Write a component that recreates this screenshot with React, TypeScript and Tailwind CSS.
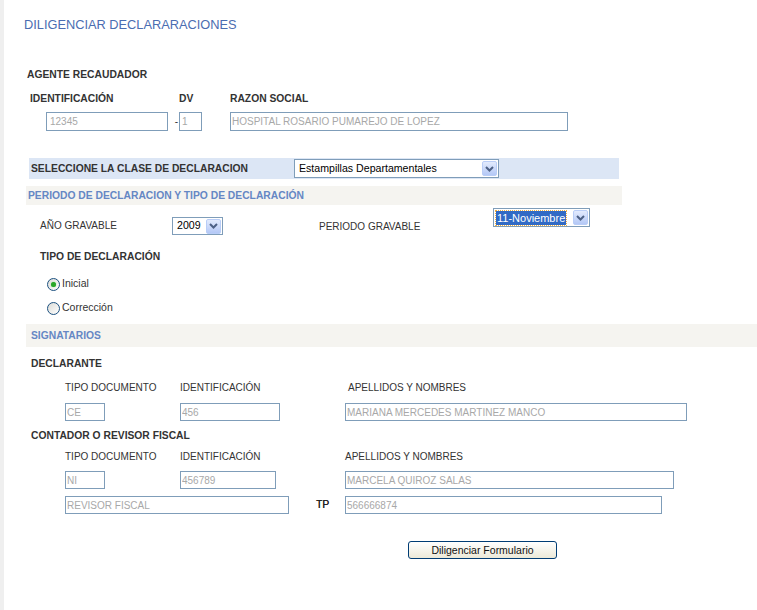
import React from "react";

type FieldProps = { value: string; w: string; h?: string; pad?: string };

const Field: React.FC<FieldProps> = ({ value, w, h = "h-[18px]", pad = "pl-[1px]" }) => (
    <input
        readOnly
        value={value}
        className={`block ${w} ${h} ${pad} border border-[#7f9db9] bg-white text-[10px] text-[#a8a8a8] outline-none`}
    />
);

const Chevron = () => (
    <svg width="9" height="6" viewBox="0 0 9 6">
        <path d="M1 1 L4.5 4.5 L8 1" fill="none" stroke="#4d6185" strokeWidth="2" />
    </svg>
);

type SelectProps = { text: string; w: string; h: string; focused?: boolean };

const XpSelect: React.FC<SelectProps> = ({ text, w, h, focused }) => (
    <div className={`${w} ${h} flex items-center border border-[#7f9db9] bg-white p-[1px]`}>
        <div className="flex-1 flex items-center min-w-0 pl-[1px]">
            {focused ? (
                <span className="bg-[#316ac5] text-white text-[11px] leading-[14px] px-[1px] outline-1 outline-dotted outline-[#f0b040]">
                    {text}
                </span>
            ) : (
                <span className="text-[10.6px] text-black pl-[2px] whitespace-nowrap">{text}</span>
            )}
        </div>
        <div className="w-[15px] h-[15px] rounded-[2px] border border-[#b9cdf7] bg-linear-to-b from-[#e3ebfd] to-[#b4c8f6] flex items-center justify-center">
            <Chevron />
        </div>
    </div>
);

const Radio: React.FC<{ checked?: boolean; label: string }> = ({ checked, label }) => (
    <div className="flex items-center h-[16px] ml-[43px]">
        <div className="w-[13px] h-[13px] rounded-full border border-[#1c5180] bg-linear-to-br from-[#dcdcd7] to-white flex items-center justify-center">
            {checked && <div className="w-[5px] h-[5px] rounded-full bg-[#2aa62a] shadow-[0_0_1px_#5fd35f]" />}
        </div>
        <span className="ml-[2px] text-[10.5px] text-[#333]">{label}</span>
    </div>
);

const App: React.FC = () => {
    const bold = "font-bold text-[10.3px] text-[#333] leading-[14px]";
    const label = "text-[10px] text-[#333] leading-[14px]";

    return (
        <div className="flex min-h-[610px] font-['Liberation_Sans',Arial,sans-serif]">
            <div className="w-[4px] shrink-0 bg-[#efefef]" />
            <div className="flex-1 bg-white flex flex-col">
                <div className="mt-[17px] pl-[20px] h-[16px] leading-[16px] text-[12.8px] text-[#4b6db1]">
                    DILIGENCIAR DECLARARACIONES
                </div>

                <div className={`mt-[35px] ml-[23px] ${bold}`}>AGENTE RECAUDADOR</div>

                <div className={`mt-[10px] ml-[26px] flex ${bold}`}>
                    <div className="w-[149px]">IDENTIFICACIÓN</div>
                    <div className="w-[51px]">DV</div>
                    <div>RAZON SOCIAL</div>
                </div>

                <div className="mt-[6px] ml-[42px] flex items-center">
                    <Field value="12345" w="w-[122px]" h="h-[19px]" pad="pl-[3px]" />
                    <div className="w-[11px] text-right text-[10px] text-[#333] pr-[1px]">-</div>
                    <Field value="1" w="w-[23px]" h="h-[19px]" pad="pl-[2px]" />
                    <div className="w-[28px]" />
                    <Field value="HOSPITAL ROSARIO PUMAREJO DE LOPEZ" w="w-[338px]" h="h-[19px]" />
                </div>

                <div className="mt-[27px] ml-[25px] w-[590px] h-[21px] bg-[#dce6f5] flex items-center">
                    <div className={`w-[265px] pl-[2px] ${bold} text-[#222]`}>SELECCIONE LA CLASE DE DECLARACION</div>
                    <XpSelect text="Estampillas Departamentales" w="w-[205px]" h="h-[19px]" />
                </div>

                <div className="mt-[7px] ml-[22px] w-[596px] h-[19px] bg-[#f5f4f0] flex items-center">
                    <div className={`pl-[2px] ${bold} text-[#6587c4]`}>PERIODO DE DECLARACION Y TIPO DE DECLARACIÓN</div>
                </div>

                <div className="mt-[3px] ml-[36px] flex items-start h-[27px]">
                    <div className={`w-[132px] mt-[11px] ${label}`}>AÑO GRAVABLE</div>
                    <div className="mt-[9px]">
                        <XpSelect text="2009" w="w-[51px]" h="h-[18px]" />
                    </div>
                    <div className="w-[96px]" />
                    <div className={`w-[174px] mt-[12px] ${label}`}>PERIODO GRAVABLE</div>
                    <XpSelect text="11-Noviembre" w="w-[97px]" h="h-[19px]" focused />
                </div>

                <div className={`mt-[15px] ml-[36px] ${bold}`}>TIPO DE DECLARACIÓN</div>

                <div className="mt-[12px]">
                    <Radio checked label="Inicial" />
                </div>
                <div className="mt-[8px]">
                    <Radio label="Corrección" />
                </div>

                <div className="mt-[8px] ml-[22px] h-[23px] bg-[#f5f4f0] flex items-center">
                    <div className={`pl-[5px] ${bold} text-[#6587c4]`}>SIGNATARIOS</div>
                </div>

                <div className={`mt-[10px] ml-[27px] ${bold} text-[#222]`}>DECLARANTE</div>

                <div className={`mt-[10px] ml-[61px] flex ${label}`}>
                    <div className="w-[115px]">TIPO DOCUMENTO</div>
                    <div className="w-[168px]">IDENTIFICACIÓN</div>
                    <div>APELLIDOS Y NOMBRES</div>
                </div>

                <div className="mt-[8px] ml-[61px] flex">
                    <div className="w-[115px]"><Field value="CE" w="w-[40px]" /></div>
                    <div className="w-[165px]"><Field value="456" w="w-[100px]" /></div>
                    <Field value="MARIANA MERCEDES MARTINEZ MANCO" w="w-[342px]" />
                </div>

                <div className={`mt-[8px] ml-[27px] ${bold} text-[#222]`}>CONTADOR O REVISOR FISCAL</div>

                <div className={`mt-[7px] ml-[61px] flex ${label}`}>
                    <div className="w-[115px]">TIPO DOCUMENTO</div>
                    <div className="w-[165px]">IDENTIFICACIÓN</div>
                    <div>APELLIDOS Y NOMBRES</div>
                </div>

                <div className="mt-[7px] ml-[61px] flex">
                    <div className="w-[115px]"><Field value="NI" w="w-[40px]" /></div>
                    <div className="w-[165px]"><Field value="456789" w="w-[96px]" /></div>
                    <Field value="MARCELA QUIROZ SALAS" w="w-[329px]" />
                </div>

                <div className="mt-[7px] ml-[61px] flex items-center">
                    <div className="w-[251px]"><Field value="REVISOR FISCAL" w="w-[224px]" /></div>
                    <div className="w-[29px] text-[10.3px] leading-[14px] text-[#222] [text-shadow:0.3px_0_0_#222]">TP</div>
                    <Field value="566666874" w="w-[317px]" />
                </div>

                <div className="mt-[27px] ml-[404px]">
                    <button className="block w-[149px] h-[18px] rounded-[3px] border border-[#003c74] bg-linear-to-b from-white to-[#ece9d8] text-[10.5px] font-normal text-[#111] leading-[16px]">
                        Diligenciar Formulario
                    </button>
                </div>
            </div>
        </div>
    );
};

export default App;
